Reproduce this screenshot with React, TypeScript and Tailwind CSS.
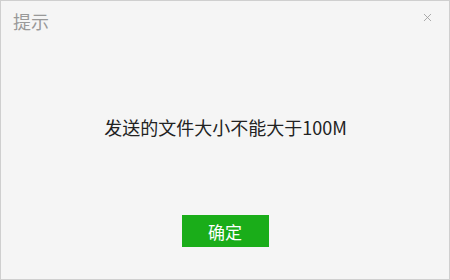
import { X } from 'lucide-react';

const App = () => {
  return (
    <div
      className="w-[450px] h-[280px] bg-[#f5f5f5] border border-[#cfcfcf] flex flex-col"
      style={{ fontFamily: '"Noto Sans CJK SC", "Noto Sans", sans-serif' }}
    >
      <div className="h-[40px] flex items-start justify-between pl-[12px] pr-[15px] pt-[7px]">
        <span className="text-[18px] leading-[26px] text-[#999999]">提示</span>
        <button className="mt-[3px] text-[#9a9a9a]">
          <X size={13} strokeWidth={1.5} />
        </button>
      </div>
      <div className="flex justify-center pt-[74px]">
        <p className="text-[18px] leading-[24px] text-[#222222] pl-[1px]">发送的文件大小不能大于100M</p>
      </div>
      <div className="flex justify-center mt-[76px]">
        <button className="w-[87px] h-[32px] bg-[#1aad19] text-white text-[17px] leading-none">
          确定
        </button>
      </div>
    </div>
  );
};

export default App;
